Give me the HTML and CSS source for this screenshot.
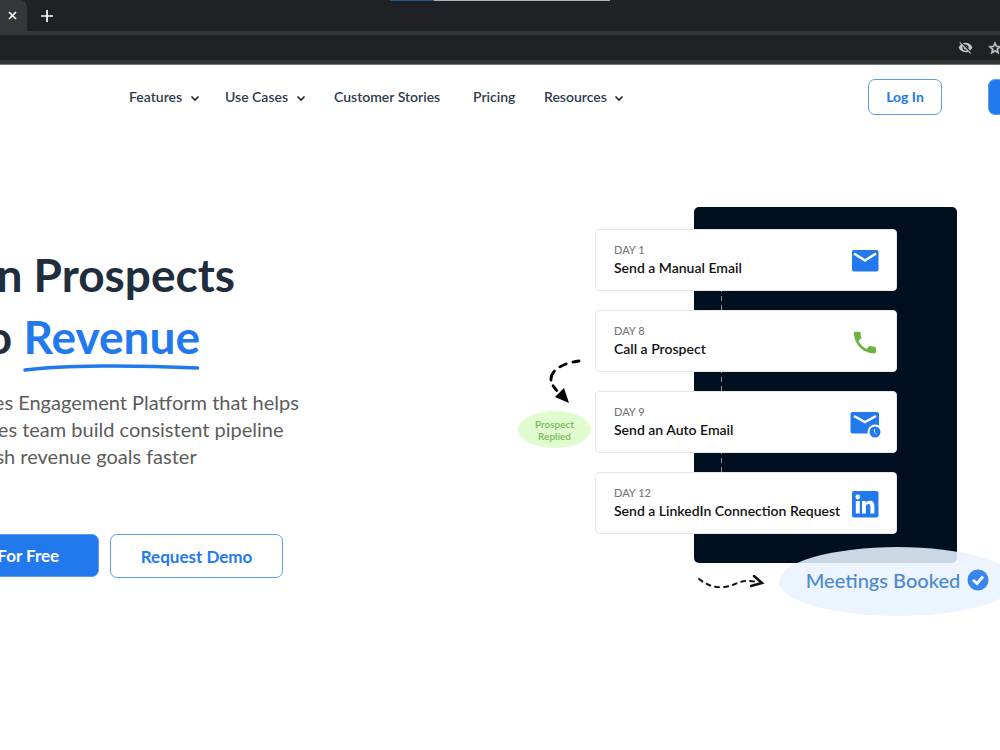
FILE: index.html
```html
<!DOCTYPE html>
<html lang="en">
<head>
  <meta charset="UTF-8">
  <meta name="viewport" content="width=device-width, initial-scale=1.0">
  <title>Sales Engagement Platform</title>
  <link rel="stylesheet" href="styles.css">
</head>
<body>
  <!-- Browser bar -->
  <div class="browser">
    <div class="tabs">
      <div class="tab">
        <button class="icon-btn" aria-label="Close tab">
          <svg width="9" height="9" viewBox="0 0 9 9"><path d="M1 1l7 7M8 1l-7 7" stroke="#fff" stroke-width="1.7"/></svg>
        </button>
      </div>
      <button class="icon-btn new-tab" aria-label="New tab">
        <svg width="12" height="12" viewBox="0 0 12 12"><path d="M6 0v12M0 6h12" stroke="#fff" stroke-width="1.7"/></svg>
      </button>
      <div class="share-strip"></div>
    </div>
    <div class="toolbar">
      <button class="icon-btn" aria-label="Hidden">
        <svg width="15" height="15" viewBox="0 0 24 24"><path fill="#c4c7c9" d="M12 7c2.760 0 5 2.240 5 5 0 .650-.130 1.260-.360 1.830l2.920 2.920c1.510-1.260 2.700-2.890 3.430-4.750-1.730-4.390-6-7.500-11-7.500-1.400 0-2.740.250-3.980.700l2.160 2.160C10.740 7.130 11.350 7 12 7zM2 4.270l2.280 2.280.460.460C3.080 8.300 1.780 10.020 1 12c1.730 4.390 6 7.500 11 7.500 1.550 0 3.030-.300 4.380-.840l.420.420L19.730 22 21 20.730 3.270 3 2 4.270zM7.530 9.800l1.550 1.550c-.050.210-.080.430-.080.650 0 1.660 1.340 3 3 3 .220 0 .440-.030.650-.080l1.550 1.550c-.670.330-1.410.530-2.200.530-2.760 0-5-2.240-5-5 0-.790.200-1.530.530-2.200zm4.310-.780l3.150 3.150.020-.160c0-1.660-1.340-3-3-3l-.170.010z"/></svg>
      </button>
      <button class="icon-btn" aria-label="Bookmark">
        <svg width="14" height="14" viewBox="0 0 24 24"><path fill="#c4c7c9" stroke="#c4c7c9" d="M23 9.240l-7.900-.680L12 1.300 8.900 8.570 1 9.240l6 5.190L5.200 22.150 12 18.060l6.800 4.090L17 14.430l6-5.190zM12 15.600l-3.960 2.390 1.050-4.510-3.490-3.030 4.610-.400L12 5.800l1.800 4.260 4.610.400-3.490 3.030 1.050 4.510L12 15.600z"/></svg>
      </button>
    </div>
  </div>

  <header class="header">
    <nav class="nav">
      <a href="#">Features <svg class="chevron" viewBox="0 0 10 7"><path d="M1.500 1.500L5 5l3.500-3.500"/></svg></a>
      <a href="#">Use Cases <svg class="chevron" viewBox="0 0 10 7"><path d="M1.500 1.500L5 5l3.500-3.500"/></svg></a>
      <a href="#">Customer Stories</a>
      <a href="#">Pricing</a>
      <a href="#">Resources <svg class="chevron" viewBox="0 0 10 7"><path d="M1.500 1.500L5 5l3.500-3.500"/></svg></a>
    </nav>
    <button class="btn btn-login">Log In</button>
    <button class="btn btn-signup" aria-label="Sign up"></button>
  </header>

  <main class="hero">
    <section class="copy">
      <h1>Turn Prospects<br>Into <span class="underlined">Revenue<svg class="swash" viewBox="0 0 176 8" preserveAspectRatio="none"><path d="M2 6C40 1 110 1 174 4" fill="none" stroke="#2279ee" stroke-width="3.500" stroke-linecap="round"/></svg></span></h1>
      <p>The Sales Engagement Platform that helps<br>your sales team build consistent pipeline<br>and crush revenue goals faster</p>
      <div class="actions">
        <button class="btn btn-primary">Try For Free</button>
        <button class="btn btn-demo">Request Demo</button>
      </div>
    </section>

    <section class="sequence">
      <div class="panel"></div>
      <ol class="steps">
        <li class="step">
          <div><small>DAY 1</small><strong>Send a Manual Email</strong></div>
          <svg width="32" height="32" viewBox="0 0 32 32"><rect x="3" y="6" width="26.500" height="21.500" rx="2" fill="#2279ee"/><path d="M5 9.500l11 7 11-7" fill="none" stroke="#fff" stroke-width="2.500"/></svg>
        </li>
        <li class="step">
          <div><small>DAY 8</small><strong>Call a Prospect</strong></div>
          <svg width="32" height="32" viewBox="0 0 32 32"><path fill="#6db33f" d="M5 8c0-.800.500-1.300 1.200-1.300h4.200c.700 0 1.200.500 1.200 1.200 0 1.500.300 3 .700 4.300.100.500 0 1-.300 1.300l-2.500 2.600c1.700 3.400 4.500 6.100 7.900 7.900l2.600-2.600c.400-.400.900-.500 1.300-.300 1.400.500 2.800.700 4.300.700.700 0 1.300.500 1.300 1.200v4.200c0 .700-.600 1.200-1.300 1.200C14.300 28.400 5 19.300 5 8z"/></svg>
        </li>
        <li class="step">
          <div><small>DAY 9</small><strong>Send an Auto Email</strong></div>
          <svg width="32" height="32" viewBox="0 0 32 32"><rect x="1.500" y="6" width="28.500" height="21.500" rx="2" fill="#2279ee"/><path d="M5 10l11 6 11-6" fill="none" stroke="#fff" stroke-width="2.500"/><circle cx="26" cy="26" r="7.500" fill="#fff"/><circle cx="26" cy="26" r="5.500" fill="#2279ee"/><path d="M25.500 23v3.500l2 1.500" fill="none" stroke="#cfe3fb"/></svg>
        </li>
        <li class="step">
          <div><small>DAY 12</small><strong>Send a LinkedIn Connection Request</strong></div>
          <svg width="32" height="32" viewBox="0 0 32 32"><rect x="3" y="4" width="26.500" height="26.500" rx="2" fill="#2279ee"/><circle cx="8.800" cy="10" r="2.400" fill="#fff"/><path fill="#fff" d="M6.800 14h4v12.500h-4zM13 14h3.800v1.700c.700-1.200 2-2 3.800-2 3.500 0 4.800 2 4.800 5.600v7.200h-4v-6.500c0-1.800-.500-2.900-2-2.900-1.800 0-2.500 1.200-2.500 3v6.400H13z"/></svg>
        </li>
      </ol>

      <svg class="arrow-replied" viewBox="0 0 36 46"><path d="M32 2C16 4 4 11 4 20c0 6 5 11 12 18" fill="none" stroke="#000" stroke-width="2.800" stroke-dasharray="6 7 7 7 10 6" stroke-linecap="round"/><path d="M22 44L8 38l9-9z"/></svg>
      <div class="badge replied">Prospect<br>Replied</div>
      <svg class="arrow-booked" viewBox="0 0 68 16"><path d="M2 4c8 6 15 9 25 8 12-1 16-9 33-5" fill="none" stroke="#111" stroke-width="2" stroke-dasharray="4 5" stroke-linecap="round"/><path d="M57 1l8 7-11 3" fill="none" stroke="#111" stroke-width="2.500" stroke-linecap="round"/></svg>
      <div class="badge booked">
        Meetings Booked
        <svg width="22" height="22" viewBox="0 0 22 22"><circle cx="11" cy="11" r="10.500" fill="#3b86ee"/><path d="M6 11l4 3.500 6-7" fill="none" stroke="#fff" stroke-width="2.800"/></svg>
      </div>
    </section>
  </main>
</body>
</html>
```
FILE: styles.css
```css
* {
  box-sizing: border-box;
}

body {
  margin: 0;
  font-family: Lato, "Liberation Sans", sans-serif;
  background: #fff;
  color: #1f2d3d;
  overflow-x: hidden;
}

button {
  font-family: inherit;
  cursor: pointer;
}

/* Browser bar */
.browser {
  background: #202124;
  border-bottom: 1px solid #76777a;
}

.tabs {
  position: relative;
  display: flex;
  align-items: center;
  height: 35px;
  border-bottom: 4px solid #35363a;
}

.tab {
  display: flex;
  align-items: center;
  justify-content: flex-end;
  width: 27px;
  height: 31px;
  padding-right: 10px;
  background: #35363a;
  border-radius: 0 7px 0 0;
}

.icon-btn {
  display: flex;
  padding: 0;
  border: 0;
  background: none;
}

.new-tab {
  margin-left: 14px;
}

.share-strip {
  position: absolute;
  top: 0;
  left: 39%;
  width: 22%;
  height: 1px;
  background: linear-gradient(to right, #235a83 20%, #b0b2b3 20%);
}

.toolbar {
  display: flex;
  align-items: center;
  justify-content: flex-end;
  gap: 15px;
  height: 29px;
  margin-right: -2px;
  border-bottom: 4px solid #35363a;
}

/* Header */
.header {
  display: flex;
  align-items: center;
  height: 64px;
  padding-left: 129px;
}

.nav {
  display: grid;
  grid-template-columns: 96px 109px 139px 71px auto;
  margin-right: auto;
}

.nav a {
  color: #2e3b4e;
  font-size: 14px;
  font-weight: 600;
  line-height: 20px;
  text-decoration: none;
  white-space: nowrap;
}

.chevron {
  width: 10px;
  height: 7px;
  margin-left: 4px;
  fill: none;
  stroke: #222;
  stroke-width: 1.6;
}

.btn {
  border: 1px solid #5c9cf2;
  border-radius: 7px;
  background: #fff;
  color: #2279ee;
  font-weight: 700;
  white-space: nowrap;
}

.btn-login {
  width: 74px;
  height: 36px;
  padding: 0 0 2px;
  font-size: 14px;
}

.btn-signup {
  width: 120px;
  height: 36px;
  margin: 0 -108px 0 46px;
  background: #2279ee;
}

/* Hero */
.hero {
  display: flex;
  align-items: flex-start;
  justify-content: space-between;
  margin-left: -70px;
  padding: 78px 43px 80px 0;
  overflow: hidden;
}

.copy {
  padding-top: 37px;
  white-space: nowrap;
}

h1 {
  margin: 0;
  font-size: 46px;
  font-weight: 700;
  line-height: 62px;
}

.underlined {
  position: relative;
  color: #2279ee;
}

.swash {
  position: absolute;
  left: 0;
  bottom: -8px;
  width: 100%;
  height: 8px;
}

.copy p {
  margin: 21px 0 64px;
  color: #5c5c5c;
  font-size: 20px;
  line-height: 27px;
}

.actions {
  display: flex;
  align-items: flex-start;
  gap: 11px;
}

.actions .btn {
  height: 44px;
  font-size: 17px;
}

.actions .btn-primary {
  width: 169px;
  height: 43px;
  background: #2279ee;
  color: #fff;
}

.btn-demo {
  width: 173px;
}

/* Sequence illustration */
.sequence {
  position: relative;
  display: grid;
  grid-template-columns: 99px 203px 60px;
}

.panel {
  grid-area: 1 / 2 / 2 / 4;
  border-radius: 5px;
  background: #011020;
}

.steps {
  grid-area: 1 / 1 / 2 / 3;
  display: grid;
  gap: 19px;
  margin: 0;
  padding: 22px 0 29px;
  list-style: none;
  background: repeating-linear-gradient(#8b929b 0 5px, transparent 5px 9px) 126px 80px / 1px 200px no-repeat;
}

.step {
  display: flex;
  align-items: center;
  justify-content: space-between;
  height: 62px;
  padding: 0 15px 0 18px;
  border: 1px solid #e6e6e6;
  border-radius: 4px;
  background: #fff;
}

.step small,
.step strong {
  display: block;
  white-space: nowrap;
}

.step small {
  color: #777;
  font-size: 11px;
  font-weight: 500;
  line-height: 16px;
}

.step strong {
  color: #111;
  font-size: 14px;
  font-weight: 600;
  line-height: 20px;
}

.badge {
  position: absolute;
  display: flex;
  align-items: center;
  justify-content: center;
  border-radius: 50%;
}

.replied {
  left: -77px;
  top: 204px;
  width: 73px;
  height: 37px;
  background: #e0fccf;
  color: #7cb65a;
  font-size: 10px;
  font-weight: 600;
  line-height: 12px;
  text-align: center;
}

.booked {
  left: 184px;
  top: 340px;
  gap: 7px;
  width: 237px;
  height: 69px;
  padding-bottom: 4px;
  background: rgba(232, 242, 255, 0.88);
  color: #4a89cf;
  font-size: 20px;
  font-weight: 500;
  white-space: nowrap;
}

.arrow-replied {
  position: absolute;
  left: -48px;
  top: 152px;
  width: 36px;
  height: 46px;
}

.arrow-booked {
  position: absolute;
  left: 102px;
  top: 368px;
  width: 68px;
  height: 16px;
}
```
